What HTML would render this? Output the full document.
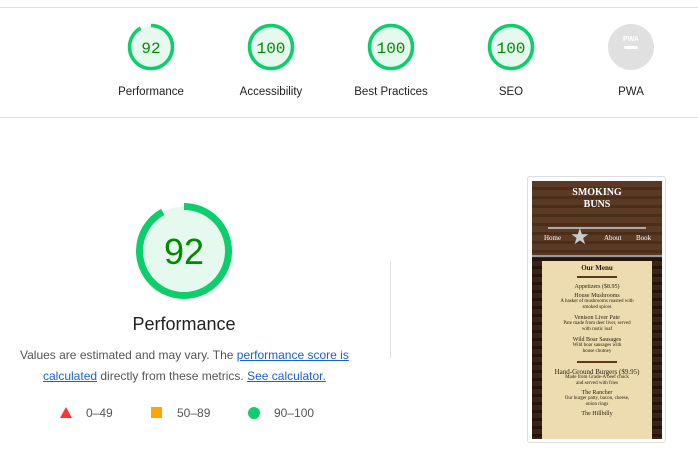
<!DOCTYPE html>
<html><head><meta charset="utf-8"><style>
body{margin:0;width:698px;height:462px;background:#fff;font-family:"Liberation Sans",sans-serif;position:relative;overflow:hidden}
.hl{position:absolute;left:0;width:698px;height:1px;background:#e0e0e0}
.g{position:absolute;top:22px;width:100px;text-align:center}
.g svg{display:block;margin:0 auto}
.g .l{font-size:11.5px;color:#212121;margin-top:14px}
.t{position:absolute;font-size:12px;color:#555;white-space:nowrap}
a{color:#1a5fd6;text-decoration:underline}
</style></head><body>
<div class="hl" style="top:7px"></div>
<div class="hl" style="top:117px"></div>

<div class="g" style="left:101px"><svg width="50" height="50"><circle cx="25" cy="25" r="21.5" fill="#e6f9ee" stroke="#0cce6b" stroke-width="3.5" stroke-dasharray="124 200" transform="rotate(-90 25 25)"/><text x="25" y="31" text-anchor="middle" font-family="Liberation Mono" font-size="16" fill="#008a00">92</text></svg><div class="l">Performance</div></div>
<div class="g" style="left:221px"><svg width="50" height="50"><circle cx="25" cy="25" r="21.5" fill="#e6f9ee" stroke="#0cce6b" stroke-width="3.5"/><text x="25" y="31" text-anchor="middle" font-family="Liberation Mono" font-size="16" fill="#008a00">100</text></svg><div class="l">Accessibility</div></div>
<div class="g" style="left:341px"><svg width="50" height="50"><circle cx="25" cy="25" r="21.5" fill="#e6f9ee" stroke="#0cce6b" stroke-width="3.5"/><text x="25" y="31" text-anchor="middle" font-family="Liberation Mono" font-size="16" fill="#008a00">100</text></svg><div class="l">Best Practices</div></div>
<div class="g" style="left:461px"><svg width="50" height="50"><circle cx="25" cy="25" r="21.5" fill="#e6f9ee" stroke="#0cce6b" stroke-width="3.5"/><text x="25" y="31" text-anchor="middle" font-family="Liberation Mono" font-size="16" fill="#008a00">100</text></svg><div class="l">SEO</div></div>
<div class="g" style="left:581px"><svg width="50" height="50"><circle cx="25" cy="25" r="23" fill="#e0e0e0"/><text x="25" y="19" text-anchor="middle" font-size="7" font-weight="bold" fill="#fff">PWA</text><rect x="18" y="24" width="14" height="3" rx="1.5" fill="#fff"/></svg><div class="l">PWA</div></div>

<svg style="position:absolute;left:134px;top:201px" width="100" height="100"><circle cx="50" cy="50" r="44.5" fill="#e6f9ee" stroke="#0cce6b" stroke-width="7" stroke-dasharray="257 400" transform="rotate(-90 50 50)"/><text x="50" y="63" text-anchor="middle" font-size="36" fill="#008a00">92</text></svg>
<div class="t" style="left:0;width:368px;text-align:center;top:314px;font-size:18px;color:#212121">Performance</div>
<div class="t" style="left:20px;top:348px">Values are estimated and may vary. The <a>performance score is</a></div>
<div class="t" style="left:43px;top:369px"><a>calculated</a> directly from these metrics. <a>See calculator.</a></div>
<svg style="position:absolute;left:60px;top:407px" width="12" height="11"><polygon points="6,0 12,11 0,11" fill="#ff3333"/></svg>
<div class="t" style="left:86px;top:406px">0–49</div>
<div style="position:absolute;left:151px;top:407px;width:11px;height:11px;background:#ffa400"></div>
<div class="t" style="left:177px;top:406px">50–89</div>
<div style="position:absolute;left:248px;top:407px;width:12px;height:12px;border-radius:50%;background:#0cce6b"></div>
<div class="t" style="left:274px;top:406px">90–100</div>
<div style="position:absolute;left:390px;top:262px;width:1px;height:96px;background:#e0e0e0"></div>

<div style="position:absolute;left:527px;top:176px;width:137px;height:265px;border:1px solid #ddd;border-radius:3px;background:#fff"></div>
<div style="position:absolute;left:532px;top:181px;width:130px;height:258px;background:repeating-linear-gradient(#3a2414 0 5px,#24150b 5px 8px);overflow:hidden">
 <div style="position:absolute;left:0;top:0;width:130px;height:74px;background:repeating-linear-gradient(#5a3a24 0 6px,#4a2e1a 6px 9px)"></div>
 <div style="position:absolute;left:0;top:6px;width:130px;text-align:center;color:#fff;font-family:'Liberation Serif',serif;font-weight:bold;font-size:10px;line-height:12px">SMOKING<br>BUNS</div>
 <div style="position:absolute;left:16px;top:46px;width:98px;height:2px;background:#aaa"></div>
 <div style="position:absolute;left:0;top:53px;width:130px;font-family:'Liberation Serif',serif;font-size:7px;color:#fff"><span style="position:absolute;left:12px">Home</span><span style="position:absolute;left:38px;color:#ccc;font-size:22px;top:-10px">★</span><span style="position:absolute;left:72px">About</span><span style="position:absolute;left:104px">Book</span></div>
 <div style="position:absolute;left:0;top:74px;width:130px;height:2px;background:#999"></div>
 <div style="position:absolute;left:10px;top:80px;width:110px;height:180px;background:#ecdcb0;font-family:'Liberation Serif',serif;font-size:5px;color:#2a1a0a;text-align:center;line-height:6px">
  <div style="font-size:7px;font-weight:bold;margin-top:4px">Our Menu</div>
  <div style="margin:5px auto;width:40px;height:2px;background:#5a3a1a"></div>
  <div style="font-size:6px;margin-top:6px">Appetizers ($8.95)</div>
  <div style="font-size:6px;margin-top:3px">House Mushrooms</div><div>A basket of mushrooms roasted with<br>smoked spices</div>
  <div style="font-size:6px;margin-top:4px">Venison Liver Pate</div><div>Pate made from deer liver, served<br>with rustic loaf</div>
  <div style="font-size:6px;margin-top:4px">Wild Boar Sausages</div><div>Wild boar sausages with<br>house chutney</div>
  <div style="margin:6px auto;width:40px;height:2px;background:#5a3a1a"></div>
  <div style="font-size:7px;margin-top:5px">Hand-Ground Burgers ($9.95)</div><div>Made from Grade-A beef chuck<br>and served with fries</div>
  <div style="font-size:6px;margin-top:3px">The Rancher</div><div>Our burger patty, bacon, cheese,<br>onion rings</div>
  <div style="font-size:6px;margin-top:3px">The Hillbilly</div>
 </div>
</div>
</body></html>
